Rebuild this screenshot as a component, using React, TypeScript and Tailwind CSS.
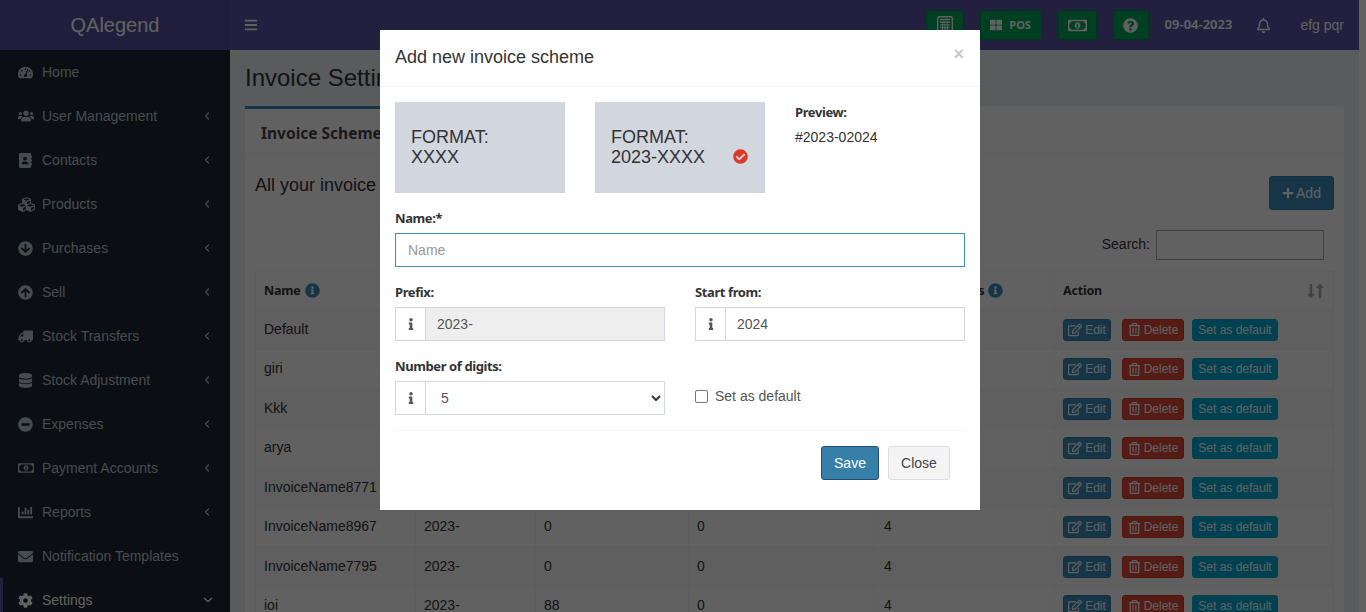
import React from "react";
import {
  FaTachometerAlt, FaUsers, FaAddressBook, FaCubes, FaArrowCircleDown, FaArrowCircleUp, FaTruck, FaDatabase,
  FaMinusCircle, FaRegMoneyBillAlt, FaChartBar, FaEnvelope, FaCog, FaBars,
  FaThLarge, FaQuestionCircle, FaRegBell, FaInfoCircle, FaInfo, FaPlus, FaRegEdit, FaRegTrashAlt,
  FaCheckCircle, FaLongArrowAltDown, FaLongArrowAltUp,
} from "react-icons/fa";
import { ChevronLeft, ChevronDown } from "lucide-react";

const menu: [React.ComponentType<{ className?: string }>, string, boolean, string][] = [
  [FaTachometerAlt, "Home", false, "text-[15px]"],
  [FaUsers, "User Management", true, "text-[16px]"],
  [FaAddressBook, "Contacts", true, "text-[15px]"],
  [FaCubes, "Products", true, "text-[17px]"],
  [FaArrowCircleDown, "Purchases", true, "text-[15px]"],
  [FaArrowCircleUp, "Sell", true, "text-[15px]"],
  [FaTruck, "Stock Transfers", true, "text-[15px] -scale-x-100"],
  [FaDatabase, "Stock Adjustment", true, "text-[15px]"],
  [FaMinusCircle, "Expenses", true, "text-[15px]"],
  [FaRegMoneyBillAlt, "Payment Accounts", true, "text-[16px]"],
  [FaChartBar, "Reports", true, "text-[15px]"],
  [FaEnvelope, "Notification Templates", false, "text-[15px]"],
];

const rows = [
  ["Default", "2023-", "0", "0", "4"],
  ["giri", "2023-", "0", "0", "4"],
  ["Kkk", "2023-", "0", "0", "4"],
  ["arya", "2023-", "0", "0", "4"],
  ["InvoiceName8771", "2023-", "0", "0", "4"],
  ["InvoiceName8967", "2023-", "0", "0", "4"],
  ["InvoiceName7795", "2023-", "0", "0", "4"],
  ["ioi", "2023-", "88", "0", "4"],
];

const source = "font-['Noto_Sans',sans-serif]";

function TopBtn({ children }: { children: React.ReactNode }) {
  return (
    <div className="h-[30px] flex items-center justify-center bg-[#00a65a] border border-[#008d4c] rounded-[2px] text-white">
      {children}
    </div>
  );
}

function CalcIcon() {
  return (
    <svg width="16" height="18" viewBox="0 0 16 18" fill="none" stroke="currentColor" strokeWidth="1.4">
      <rect x="0.7" y="0.7" width="14.6" height="16.6" rx="1.2" />
      <path d="M3 6.2h10M3 3.5h10" />
      <path d="M3 9h10M3 11.7h10M3 14.4h10M5.6 7.5v8M8 7.5v8M10.4 7.5v8" strokeWidth="1" />
    </svg>
  );
}

function InfoGroup({ children }: { children: React.ReactNode }) {
  return (
    <div className="flex h-[34px]">
      <div className="w-[30px] shrink-0 flex items-center justify-center border border-[#d2d6de] border-r-0 bg-white text-[#555]">
        <FaInfo className="text-[12px]" />
      </div>
      {children}
    </div>
  );
}

function Label({ children }: { children: React.ReactNode }) {
  return <div className={`${source} text-[13px] leading-[20px] font-bold text-[#333] tracking-[-0.4px] mb-[5px]`}>{children}</div>;
}

export default function App() {
  return (
    <div className="relative h-screen overflow-hidden bg-white font-['Liberation_Sans',Arial,sans-serif] text-[14px] text-[#333]">
      <div className="w-[1359px] h-full flex flex-col bg-[#ecf0f5]">
        <header className="h-[50px] shrink-0 flex bg-[#5d54a6]">
          <div className="w-[230px] shrink-0 flex items-center justify-center text-[20px] text-white bg-[#574e9e]">QAlegend</div>
          <div className="flex-1 flex items-center pl-[14px] text-white">
            <FaBars className="text-[14px]" />
            <div className="ml-auto flex items-center">
              <div className="flex items-center gap-[16px]">
                <TopBtn><div className="w-[36px] flex justify-center"><CalcIcon /></div></TopBtn>
                <TopBtn>
                  <div className={`w-[60px] flex items-center justify-center gap-[7px] ${source} text-[11px] font-bold`}>
                    <FaThLarge className="text-[12px]" />POS
                  </div>
                </TopBtn>
                <TopBtn><div className="w-[37px] flex justify-center"><FaRegMoneyBillAlt className="text-[19px]" /></div></TopBtn>
                <TopBtn><div className="w-[34px] flex justify-center"><FaQuestionCircle className="text-[15px]" /></div></TopBtn>
              </div>
              <span className={`ml-[16px] ${source} text-[13px] font-semibold`}>09-04-2023</span>
              <FaRegBell className="ml-[24px] text-[15px]" />
              <span className="ml-[29px] mr-[15px]">efg pqr</span>
            </div>
          </div>
        </header>
        <div className="flex-1 flex min-h-0">
          <aside className="w-[230px] shrink-0 bg-[#1e2530] text-[#b8c7ce]">
            {menu.map(([Icon, name, arrow, size]) => (
              <div key={name} className="h-[44px] flex items-center pl-[18px] pr-[17px]">
                <span className="w-[24px] shrink-0"><Icon className={size} /></span>
                <span>{name}</span>
                {arrow && <ChevronLeft size={12} strokeWidth={2.5} className="ml-auto" />}
              </div>
            ))}
            <div className="h-[44px] flex items-center pl-[15px] pr-[15px] border-l-[3px] border-[#5d54a6] text-white">
              <span className="w-[24px] shrink-0"><FaCog className="text-[15px]" /></span>
              <span>Settings</span>
              <ChevronDown size={14} strokeWidth={2} className="ml-auto" />
            </div>
          </aside>
          <main className="flex-1 min-w-0 pl-[15px] pr-[15px]">
            <h1 className="text-[24px] leading-[26px] pt-[15px] h-[56px]">Invoice Settings</h1>
            <section className="bg-white rounded-[3px]">
              <div className="flex h-[49px] border-b border-[#f4f4f4]">
                <div className={`w-[172px] border-t-[3px] border-[#3c8dbc] pl-[16px] pt-[13px] ${source} text-[15.5px] font-bold whitespace-nowrap text-[#444]`}>Invoice Schemes</div>
                <div className={`pl-[20px] pt-[16px] ${source} text-[15px]`}>Invoice Layouts</div>
              </div>
              <div className="px-[10px] pt-[21px]">
                <div className="flex justify-between">
                  <div className="text-[18px] leading-[20px] -mt-[1px]">All your invoice schemes</div>
                  <div className="h-[34px] w-[65px] flex items-center justify-center gap-[2px] bg-[#3c8dbc] border border-[#367fa9] rounded-[3px] text-white">
                    <FaPlus className="text-[12px]" />Add
                  </div>
                </div>
                <div className="flex justify-end items-center gap-[6px] mt-[20px] pr-[10px]">
                  <span className="-mt-[2px]">Search:</span>
                  <div className="w-[168px] h-[30px] border border-[#aaa]" />
                </div>
                <table className="w-full table-fixed mt-[11px] border-collapse">
                  <colgroup>
                    <col className="w-[160px]" />
                    <col className="w-[120px]" />
                    <col className="w-[153px]" />
                    <col className="w-[185px]" />
                    <col className="w-[181px]" />
                    <col />
                  </colgroup>
                  <thead>
                    <tr className={`h-[38px] ${source} text-[12.5px] font-bold tracking-[-0.2px] text-left`}>
                      <th className="border border-[#f4f4f4] pl-[8px] pt-[2px]">Name <FaInfoCircle className="inline text-[#3c8dbc] text-[15px] mb-[3px] ml-[1px]" /></th>
                      <th className="border border-[#f4f4f4] pl-[8px] pt-[2px]">Prefix</th>
                      <th className="border border-[#f4f4f4] pl-[8px] pt-[2px]">Start from</th>
                      <th className="border border-[#f4f4f4] pl-[8px] pt-[2px]">Invoice count</th>
                      <th className="border border-[#f4f4f4] pl-[8px] pt-[2px] whitespace-nowrap">Number of digits <FaInfoCircle className="inline text-[#3c8dbc] text-[15px] mb-[3px] ml-[1px]" /></th>
                      <th className="border border-[#f4f4f4] pl-[8px] pt-[2px]">
                        <div className="flex items-center justify-between pr-[5px]">
                          Action
                          <span className="flex text-[#aaa] text-[16px] -mt-[1px]"><FaLongArrowAltDown className="-mr-[7px]" /><FaLongArrowAltUp /></span>
                        </div>
                      </th>
                    </tr>
                  </thead>
                  <tbody>
                    {rows.map((r, i) => (
                      <tr key={i} className={`h-[39.5px] ${i % 2 === 0 ? "bg-[#f9f9f9]" : "bg-white"}`}>
                        {r.map((c, j) => (
                          <td key={j} className={`border border-[#f4f4f4] ${j === 4 ? "pl-[10px]" : "pl-[8px]"}`}>{c}</td>
                        ))}
                        <td className="border border-[#f4f4f4] pl-[8px]">
                          <div className="flex items-center text-[12px] text-white mt-[1px]">
                            <div className="w-[48px] h-[22px] flex items-center justify-center gap-[3px] rounded-[3px] bg-[#3c8dbc] border border-[#367fa9]"><FaRegEdit className="text-[14px]" />Edit</div>
                            <div className="ml-[11px] w-[62px] h-[22px] flex items-center justify-center gap-[3px] rounded-[3px] bg-[#dd4b39] border border-[#d73925]"><FaRegTrashAlt className="text-[13px]" />Delete</div>
                            <div className="ml-[8px] w-[86px] h-[22px] flex items-center justify-center rounded-[3px] bg-[#00acd6] border border-[#00acd6]">Set as default</div>
                          </div>
                        </td>
                      </tr>
                    ))}
                  </tbody>
                </table>
              </div>
            </section>
          </main>
        </div>
      </div>

      {/* backdrop */}
      <div className="absolute inset-0 bg-[#000]/[0.62]" />

      {/* modal */}
      <div className="absolute left-[380px] top-[30px] w-[600px] h-[480px] bg-white">
        <div className="h-[57px] border-b border-[#f4f4f4] flex items-center justify-between pl-[15px] pr-[16px] pb-[2px]">
          <span className="text-[18px] text-[#333]">Add new invoice scheme</span>
          <span className="text-[18px] font-bold text-[#c9c9c9] mb-[5px]">×</span>
        </div>
        <div className="px-[15px] pt-[15px]">
          <div className="grid grid-cols-[170px_170px_170px] gap-x-[30px] h-[91px]">
            <div className="bg-[#d2d6de] pl-[16px] pt-[25px] text-[18px] leading-[20px]">FORMAT:<br />XXXX</div>
            <div className="relative bg-[#d2d6de] pl-[16px] pt-[25px] text-[18px] leading-[20px]">
              FORMAT:<br />2023-XXXX
              <FaCheckCircle className="absolute left-[138px] top-[47px] text-[15px] text-[#dc3a24]" />
            </div>
            <div>
              <div className={`${source} text-[13px] leading-[20px] font-bold tracking-[-0.4px]`}>Preview:</div>
              <div className="mt-[5px] leading-[20px]">#2023-02024</div>
            </div>
          </div>
          <div className="mt-[15px]">
            <Label>Name:*</Label>
            <div className="h-[34px] border border-[#3c8dbc] flex items-center px-[12px] text-[#999]">Name</div>
          </div>
          <div className="grid grid-cols-2 gap-x-[30px] mt-[15px]">
            <div>
              <Label>Prefix:</Label>
              <InfoGroup>
                <div className="flex-1 border border-[#d2d6de] bg-[#eee] flex items-center px-[11px] text-[#555]">2023-</div>
              </InfoGroup>
            </div>
            <div>
              <Label>Start from:</Label>
              <InfoGroup>
                <div className="flex-1 border border-[#d2d6de] flex items-center px-[11px] text-[#555]">2024</div>
              </InfoGroup>
            </div>
            <div className="mt-[15px]">
              <Label>Number of digits:</Label>
              <InfoGroup>
                <div className="flex-1 border border-[#d2d6de] flex items-center justify-between pl-[15px] pr-[2px] text-[#555]">
                  5
                  <svg width="10" height="6" viewBox="0 0 10 6" className="mr-[1px]"><path d="M1 1l4 4 4-4" fill="none" stroke="#333" strokeWidth="2" /></svg>
                </div>
              </InfoGroup>
            </div>
            <div className="mt-[15px] pt-[25px] flex items-start">
              <div className="flex items-center h-[34px] gap-[7px] -mt-[2px] text-[#555]">
                <div className="w-[13px] h-[13px] border border-[#767676] rounded-[2px] bg-white" />
                Set as default
              </div>
            </div>
          </div>
          <div className="mt-[15px] border-t border-[#f4f4f4] pt-[15px] flex justify-end pr-[15px] gap-[9px]">
            <div className="w-[58px] h-[34px] flex items-center justify-center bg-[#367fa9] border border-[#204d74] rounded-[3px] text-white">Save</div>
            <div className="w-[62px] h-[34px] flex items-center justify-center bg-[#f4f4f4] border border-[#ddd] rounded-[3px] text-[#444]">Close</div>
          </div>
        </div>
      </div>
    </div>
  );
}
